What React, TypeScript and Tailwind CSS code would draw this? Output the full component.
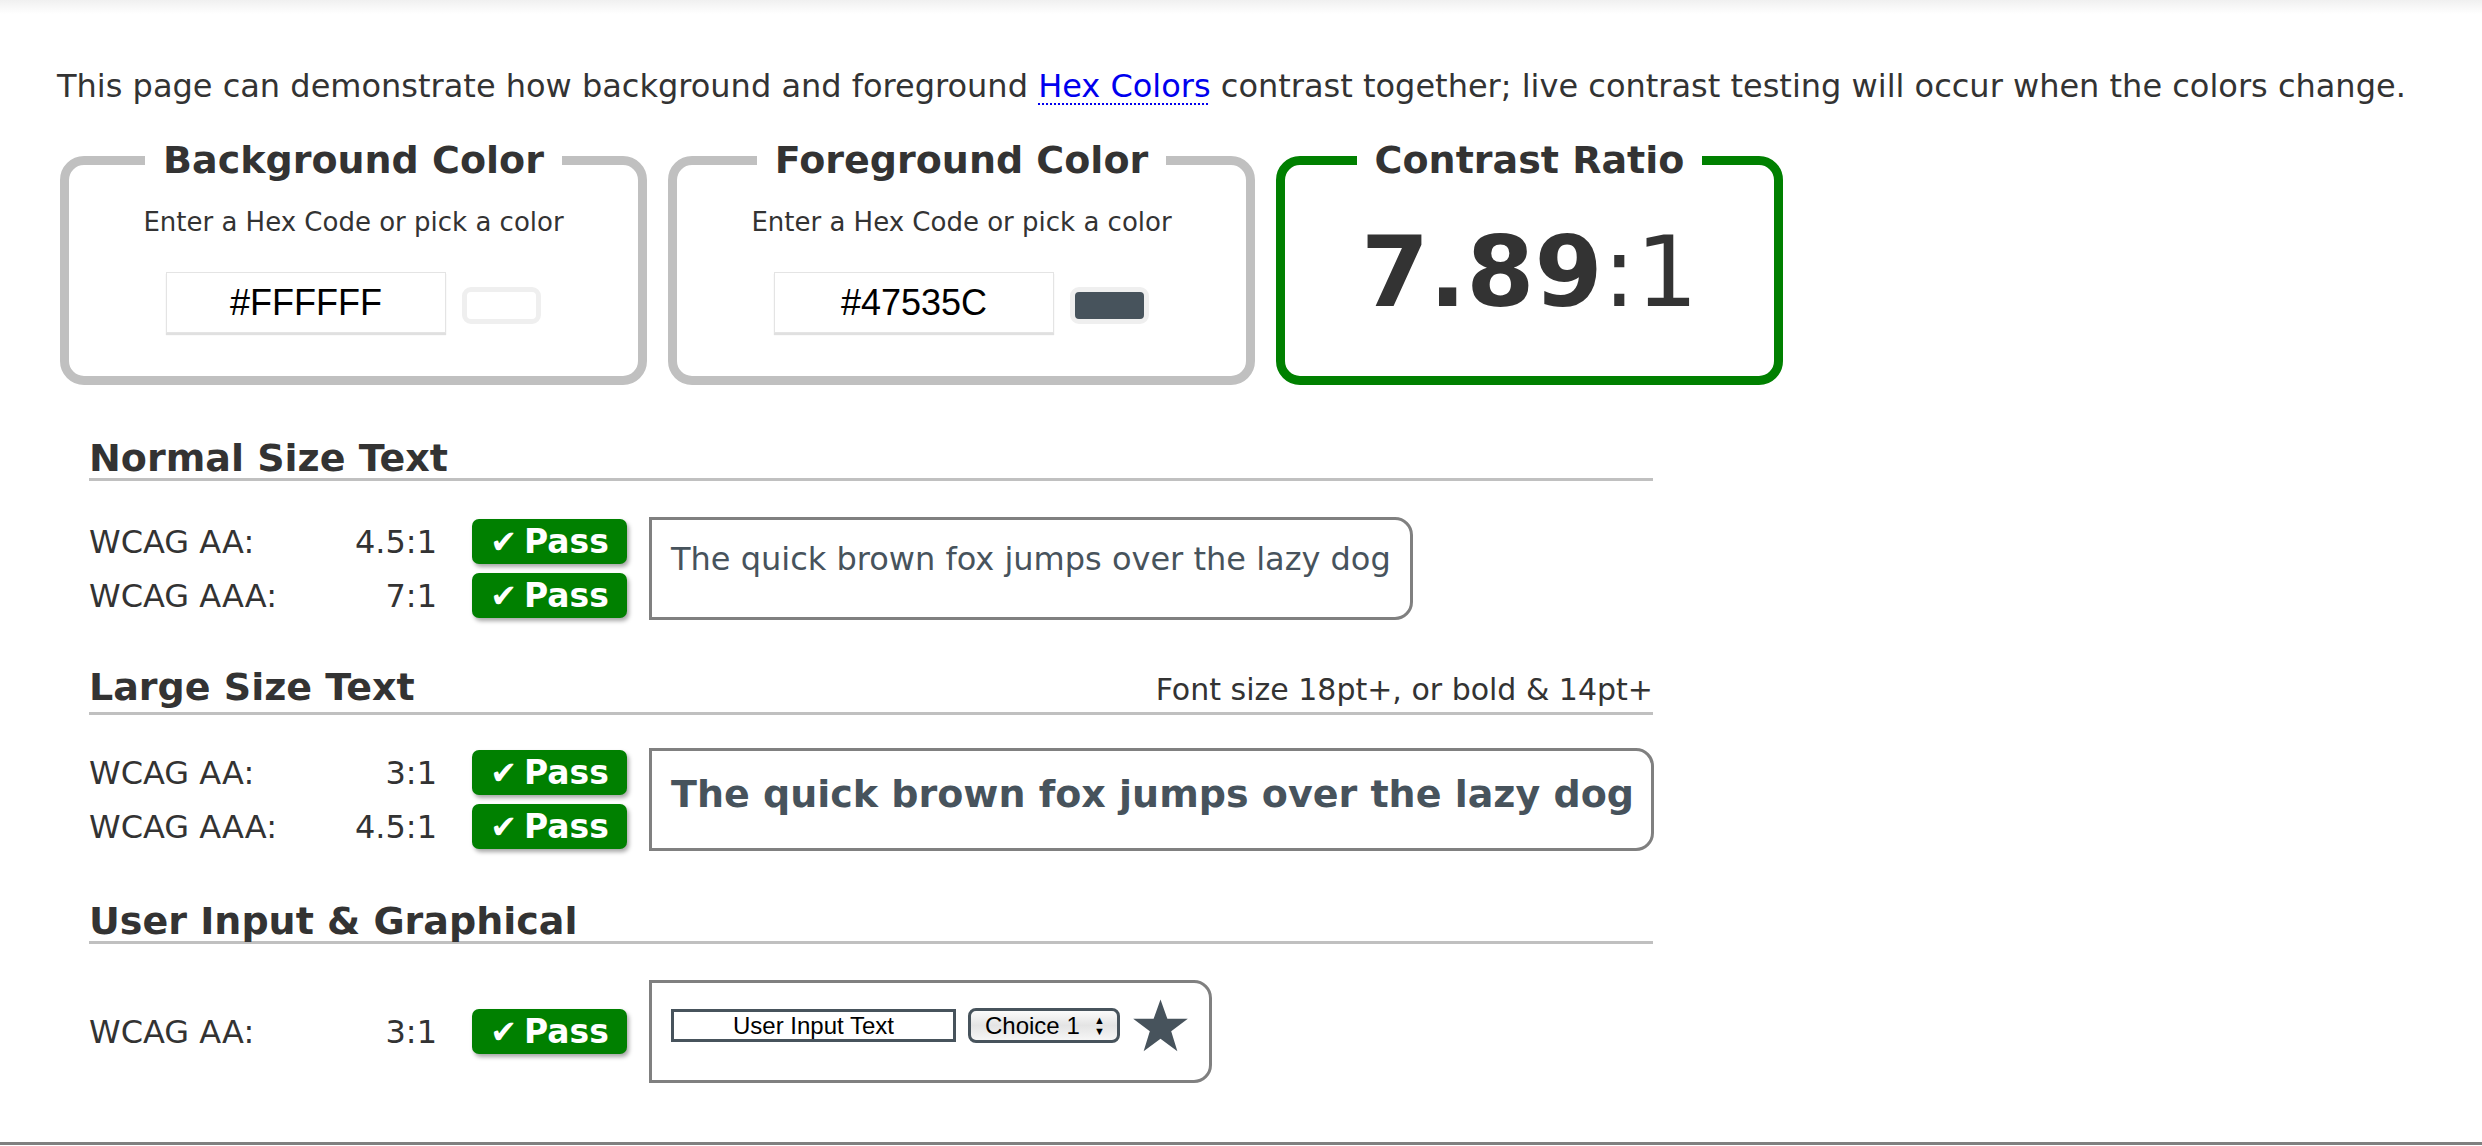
import React from "react";

type Row = { label: string; ratio: string };

function PassBadge() {
  return (
    <div className="flex h-[45px] w-[155px] items-center justify-center gap-[7px] rounded-[7px] bg-[#008000] text-[33px] font-bold leading-none text-white shadow-[2px_3px_4px_rgba(0,0,0,0.35)]">
      <span className="text-[32px]">✔</span>
      <span>Pass</span>
    </div>
  );
}

function ColorBox({ title, value, swatch }: { title: string; value: string; swatch: string }) {
  return (
    <fieldset className="h-[248px] w-[587px] rounded-[24px] border-[9px] border-[#c0c0c0] px-4 pt-[24px] text-center">
      <legend className="mx-auto px-[18px] text-[38px] font-bold leading-[46px]">{title}</legend>
      <p className="text-[26px] leading-[30px]">Enter a Hex Code or pick a color</p>
      <div className="mt-[35px] flex items-center justify-center gap-[16px]">
        <div className="flex h-[61px] w-[280px] items-center justify-center border border-[#e4e4e4] bg-white font-['Liberation_Sans',Arial,sans-serif] text-[36px] text-black shadow-[0_2px_1px_rgba(0,0,0,0.12)]">
          {value}
        </div>
        <div className={`mt-[6px] h-[37px] w-[79px] rounded-[9px] border-[5px] border-[#efefef] ${swatch}`} />
      </div>
    </fieldset>
  );
}

function Section({
  title,
  note,
  rows,
  className,
  rowsClass,
  children,
}: {
  title: string;
  note?: string;
  rows: Row[];
  className: string;
  rowsClass: string;
  children: React.ReactNode;
}) {
  return (
    <section className={className}>
      <div className="flex items-baseline justify-between border-b-[3px] border-[#c0c0c0]">
        <h2 className="text-[38px] font-bold leading-[40px]">{title}</h2>
        {note && <span className="text-[30px]">{note}</span>}
      </div>
      <div className={`flex items-center ${rowsClass}`}>
        <div className="flex shrink-0 flex-col gap-[9px]">
          {rows.map((r) => (
            <div key={r.label} className="flex items-center">
              <div className="flex w-[348px] justify-between text-[32px] leading-none">
                <span>{r.label}</span>
                <span>{r.ratio}</span>
              </div>
              <div className="ml-[35px]">
                <PassBadge />
              </div>
            </div>
          ))}
        </div>
        <div className="ml-[22px] shrink-0">{children}</div>
      </div>
    </section>
  );
}

export default function App() {
  return (
    <div className="flex h-[1146px] flex-col bg-white font-['DejaVu_Sans',Verdana,sans-serif] text-[#333]">
      {/* top shadow */}
      <div className="h-[14px] bg-gradient-to-b from-[#f0f0f0] to-white" />

      <div className="pl-[57px] pt-[53px]">
        <p className="text-[32px] leading-[38px]">
          This page can demonstrate how background and foreground{" "}
          <a className="text-[#0000ee] underline decoration-dotted decoration-2 underline-offset-[6px]">Hex Colors</a>{" "}
          contrast together; live contrast testing will occur when the colors change.
        </p>

        <div className="ml-[3px] mt-[32px] flex gap-[21px]">
          <ColorBox title="Background Color" value="#FFFFFF" swatch="bg-white" />
          <ColorBox title="Foreground Color" value="#47535C" swatch="bg-[#47535C]" />
          <fieldset className="h-[248px] w-[507px] rounded-[24px] border-[9px] border-[#008000] text-center">
            <legend className="mx-auto px-[18px] text-[38px] font-bold leading-[46px]">Contrast Ratio</legend>
            <div className="pt-[40px] text-[98px] leading-[98px]">
              <span className="font-bold">7.89</span>
              <span>:1</span>
            </div>
          </fieldset>
        </div>

        <div className="ml-[32px] flex w-[1564px] flex-col">
          <Section
            title="Normal Size Text"
            className="mt-[53px]"
            rowsClass="mt-[36px]"
            rows={[
              { label: "WCAG AA:", ratio: "4.5:1" },
              { label: "WCAG AAA:", ratio: "7:1" },
            ]}
          >
            <div className="h-[103px] whitespace-nowrap rounded-r-[18px] border-[3px] border-[#808080] px-[19px] pt-[20px] text-[32px] leading-[38px] text-[#47535C]">
              The quick brown fox jumps over the lazy dog
            </div>
          </Section>

          <Section
            title="Large Size Text"
            note="Font size 18pt+, or bold & 14pt+"
            className="mt-[47px]"
            rowsClass="mt-[33px]"
            rows={[
              { label: "WCAG AA:", ratio: "3:1" },
              { label: "WCAG AAA:", ratio: "4.5:1" },
            ]}
          >
            <div className="h-[103px] whitespace-nowrap rounded-r-[18px] border-[3px] border-[#808080] pl-[19px] pr-[17px] pt-[21px] text-[38px] font-bold leading-[44px] text-[#47535C]">
              The quick brown fox jumps over the lazy dog
            </div>
          </Section>

          <Section
            title="User Input & Graphical"
            className="mt-[50px]"
            rowsClass="mt-[36px]"
            rows={[{ label: "WCAG AA:", ratio: "3:1" }]}
          >
            <div className="flex h-[103px] items-center gap-[12px] rounded-r-[18px] border-[3px] border-[#808080] pb-[12px] pl-[19px] pr-[20px] font-['Liberation_Sans',Arial,sans-serif] text-[24px] text-black">
              <div className="flex h-[33px] w-[285px] items-center justify-center border-[3px] border-[#47535C] leading-none">
                User Input Text
              </div>
              <div className="flex h-[35px] w-[152px] items-center justify-between rounded-[8px] border-[3px] border-[#47535C] bg-gradient-to-b from-[#fbfbfb] via-[#e4e4e4] to-[#f6f6f6] pl-[14px] pr-[12px] leading-none">
                <span>Choice 1</span>
                <span className="flex flex-col text-[11px] leading-[11px]">
                  <span>▲</span>
                  <span>▼</span>
                </span>
              </div>
              <svg viewBox="0 0 24 24" className="h-[57px] w-[57px]">
                <polygon
                  fill="#47535C"
                  points="12,1 14.9,9.2 23.5,9.2 16.5,14.4 19.1,22.8 12,17.6 4.9,22.8 7.5,14.4 0.5,9.2 9.1,9.2"
                />
              </svg>
            </div>
          </Section>
        </div>
      </div>

      <div className="mt-auto mb-[1px] h-[3px] bg-[#808080]" />
    </div>
  );
}
